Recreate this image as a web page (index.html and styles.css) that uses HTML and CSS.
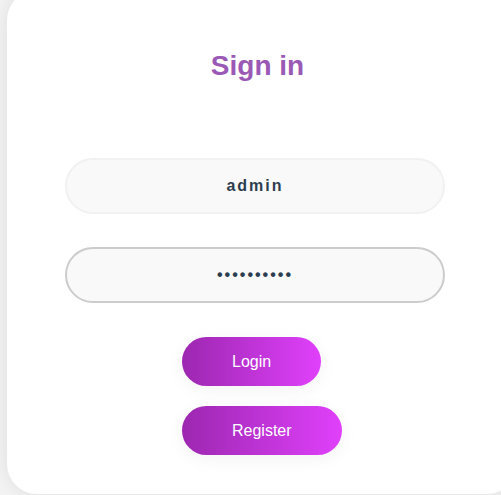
FILE: index.html
```html
<!DOCTYPE html>
<html>
<head>
<meta charset="utf-8">
<link rel="stylesheet" href="styles.css">
</head>
<body>
<div class="card">
  <h1 class="title">Sign in</h1>
  <form class="form">
    <input class="field field-user" type="text" value="admin">
    <input class="field field-pass" type="password" value="1234567890">
    <div class="actions">
      <button type="button" class="btn">Login</button>
      <button type="button" class="btn">Register</button>
    </div>
  </form>
</div>
</body>
</html>
```
FILE: styles.css
```css
html, body {
  margin: 0;
  padding: 0;
}
body {
  background: #f3f3f3;
  font-family: "Liberation Sans", Arial, sans-serif;
  width: 501px;
  height: 495px;
  overflow: hidden;
}
.card {
  box-sizing: border-box;
  margin: -10px 0 0 7px;
  width: 510px;
  height: 504px;
  background: #ffffff;
  border-radius: 30px;
  box-shadow: 0 0 18px rgba(0, 0, 0, 0.09);
  padding-top: 60px;
}
.title {
  margin: 0;
  text-align: center;
  font-size: 28px;
  line-height: 32px;
  font-weight: bold;
  color: #9b59b6;
  padding-right: 9px;
}
.form {
  display: flex;
  flex-direction: column;
  margin-top: 76px;
  padding-left: 58px;
}
.field {
  box-sizing: border-box;
  width: 380px;
  height: 56px;
  border-radius: 28px;
  background: #f9f9f9;
  text-align: center;
  font-family: "Liberation Sans", Arial, sans-serif;
  font-size: 16px;
  font-weight: bold;
  letter-spacing: 2px;
  color: #2c3e50;
  outline: none;
  padding: 0 20px;
}
.field-user {
  border: 2px solid #f1f1f1;
}
.field-pass {
  margin-top: 33px;
  height: 56px;
  border: 2px solid #cccccc;
  font-size: 16px;
}
.actions {
  display: flex;
  flex-direction: column;
  align-items: flex-start;
  gap: 20px;
  margin-top: 34px;
  padding-left: 117px;
}
.btn {
  height: 49px;
  padding: 0 50px;
  border: none;
  border-radius: 25px;
  background: linear-gradient(to right, #9c27b0, #e040fb);
  color: #ffffff;
  font-family: "Liberation Sans", Arial, sans-serif;
  font-size: 16px;
  box-shadow: 0 4px 18px rgba(0, 0, 0, 0.05);
  cursor: pointer;
}
```
